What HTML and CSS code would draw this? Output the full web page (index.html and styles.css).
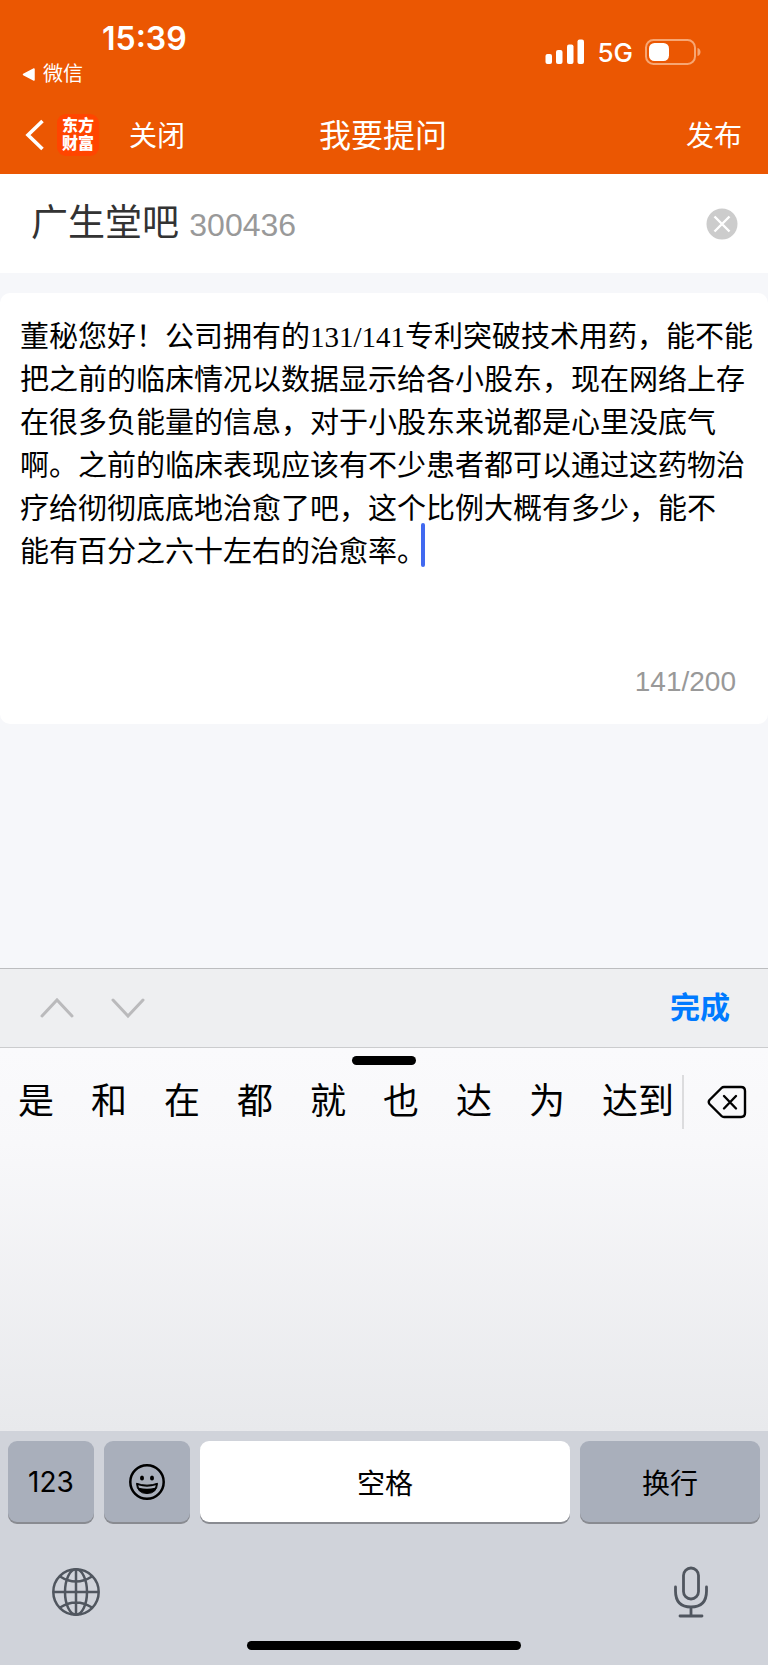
FILE: index.html
```html
<!DOCTYPE html>
<html lang="zh-CN">
<head>
    <meta charset="UTF-8">
    <meta name="viewport" content="width=device-width, initial-scale=1.0">
    <title>我要提问</title>
    <link rel="stylesheet" href="styles.css">
</head>
<body>
<div class="phone">
    <header class="header">
        <div class="status">
            <div class="status-left">
                <p class="time">15:39</p>
                <a class="back-app" href="#">
                    <svg width="13" height="13" viewBox="0 0 13 13"><path d="M12 1V12L1.500 6.500Z" fill="#fff" stroke="#fff" stroke-width="1.500" stroke-linejoin="round"/></svg>
                    微信
                </a>
            </div>
            <div class="status-right">
                <svg width="40" height="26" viewBox="0 0 40 26" fill="#fff">
                    <rect x="0.500" y="15" width="6.500" height="10" rx="2"/>
                    <rect x="11" y="11" width="6.500" height="14" rx="2"/>
                    <rect x="22" y="5.500" width="6.500" height="19.500" rx="2"/>
                    <rect x="32.500" y="0.500" width="6.500" height="24.500" rx="2"/>
                </svg>
                <span class="network">5G</span>
                <svg width="56" height="26" viewBox="0 0 56 26">
                    <rect x="1" y="1" width="49" height="24" rx="7.500" fill="none" stroke="#f7a673" stroke-width="2"/>
                    <path d="M52.500 9c4 1 4 7 0 8z" fill="#f7a673"/>
                    <rect x="4" y="4" width="20" height="18" rx="5.500" fill="#fff"/>
                </svg>
            </div>
        </div>
        <nav class="navbar">
            <div class="nav-left">
                <button class="icon-btn back" aria-label="返回">
                    <svg width="20" height="32" viewBox="0 0 20 32"><path d="M18.500 2L4 16L18.500 30" fill="none" stroke="#fff" stroke-width="3.600"/></svg>
                </button>
                <span class="logo">东方<br>财富</span>
                <button class="nav-btn">关闭</button>
            </div>
            <h1>我要提问</h1>
            <button class="nav-btn publish">发布</button>
        </nav>
    </header>

    <main class="main">
        <div class="stock">
            <p class="stock-name">广生堂吧 <span class="stock-code">300436</span></p>
            <button class="icon-btn" aria-label="清除">
                <svg width="32" height="32" viewBox="0 0 32 32"><circle cx="16" cy="16" r="15.500" fill="#ccc"/><path d="M8.500 8.500L23.500 23.500M23.500 8.500L8.500 23.500" stroke="#fff" stroke-width="2.400"/></svg>
            </button>
        </div>
        <div class="question">
            <div class="editor">
                <textarea class="question-text" aria-label="提问内容" spellcheck="false">董秘您好！公司拥有的131/141专利突破技术用药，能不能把之前的临床情况以数据显示给各小股东，现在网络上存在很多负能量的信息，对于小股东来说都是心里没底气啊。之前的临床表现应该有不少患者都可以通过这药物治疗给彻彻底底地治愈了吧，这个比例大概有多少，能不
能有百分之六十左右的治愈率。</textarea>
                <span class="caret"></span>
            </div>
            <p class="count">141/200</p>
        </div>
    </main>

    <div class="toolbar">
        <button class="icon-btn" aria-label="上一项">
            <svg width="34" height="22" viewBox="0 0 34 22"><path d="M2 19L17 3L32 19" fill="none" stroke="#bababc" stroke-width="3" stroke-linecap="round"/></svg>
        </button>
        <button class="icon-btn" aria-label="下一项">
            <svg width="34" height="22" viewBox="0 0 34 22"><path d="M2 3L17 19L32 3" fill="none" stroke="#bababc" stroke-width="3" stroke-linecap="round"/></svg>
        </button>
        <button class="done">完成</button>
    </div>

    <div class="writing">
        <div class="handle"></div>
        <div class="candidates">
            <button>是</button>
            <button>和</button>
            <button>在</button>
            <button>都</button>
            <button>就</button>
            <button>也</button>
            <button>达</button>
            <button>为</button>
            <button>达到</button>
            <button class="delete" aria-label="删除">
                <svg width="40" height="34" viewBox="0 0 40 34" fill="none" stroke="#000" stroke-width="2.400" stroke-linejoin="round" stroke-linecap="round"><path d="M17 2H34Q38 2 38 6V28Q38 32 34 32H17Q15.500 32 14.500 31L2.500 19Q1 17 2.500 15L14.500 3Q15.500 2 17 2Z"/><path d="M17 11L29 23.500M29 11L17 23.500"/></svg>
            </button>
        </div>
    </div>

    <div class="keyboard">
        <div class="keys">
            <button class="key num">123</button>
            <button class="key" aria-label="表情">
                <svg width="36" height="36" viewBox="0 0 36 36"><circle cx="18" cy="18" r="16.700" fill="none" stroke="#000" stroke-width="2.500"/><ellipse cx="13" cy="14" rx="2" ry="2.500"/><ellipse cx="23" cy="14" rx="2" ry="2.500"/><path d="M7.500 19.300Q18 23 28.500 19.300Q28 29.500 18 29.500Q8 29.500 7.500 19.300Z" stroke="#000" stroke-linejoin="round"/><path d="M9.200 21.300Q18 24 26.800 21.300L26 23.700Q18 26 10 23.700Z" fill="#a9afbb"/></svg>
            </button>
            <button class="key space">空格</button>
            <button class="key enter">换行</button>
        </div>
        <div class="key-tools">
            <button class="icon-btn" aria-label="切换键盘">
                <svg width="48" height="48" viewBox="0 0 48 48" fill="none" stroke="#50565f" stroke-width="2.500"><circle cx="24" cy="24" r="22.700"/><ellipse cx="24" cy="24" rx="11" ry="22.700"/><path d="M24 1V47M1 24H47M8 8.500Q24 18.500 40 8.500M8 39.500Q24 29.500 40 39.500"/></svg>
            </button>
            <button class="icon-btn" aria-label="语音输入">
                <svg width="36" height="52" viewBox="0 0 36 52" fill="none" stroke="#50565f" stroke-width="2.800" stroke-linecap="round"><rect x="10.500" y="2" width="15" height="31" rx="7.500"/><path d="M2.500 21V25Q2.500 41 18 41Q33.500 41 33.500 25V21M18 41V50M7 50H29"/></svg>
            </button>
        </div>
        <div class="home-bar"></div>
    </div>
</div>
</body>
</html>
```
FILE: styles.css
```css
*{
    margin: 0;
    padding: 0;
    box-sizing: border-box;
}
body{
    font-family: "Liberation Sans", "Noto Sans CJK SC", sans-serif;
    background-color: #f6f7fa;
    color: #000;
}
button{
    border: none;
    background: none;
    font-family: inherit;
    color: inherit;
    cursor: pointer;
}
svg{
    display: block;
}
.phone{
    min-height: 100vh;
    display: flex;
    flex-direction: column;
}

/* header */
.header{
    background-color: #eb5702;
    color: #fff;
}
.status{
    display: flex;
    justify-content: space-between;
    padding: 20px 67px 0 22px;
    height: 96px;
}
.time{
    font-family: Inter, sans-serif;
    font-size: 32px;
    font-weight: 600;
    line-height: 38px;
    padding-left: 80px;
}
.back-app{
    display: flex;
    align-items: center;
    gap: 8px;
    color: #fff;
    font-size: 20px;
    line-height: 32px;
    text-decoration: none;
}
.status-right{
    display: flex;
    align-items: center;
    gap: 12px;
    height: 64px;
}
.network{
    font-family: Inter, sans-serif;
    font-size: 26px;
    font-weight: 500;
}
.navbar{
    display: grid;
    grid-template-columns: 1fr auto 1fr;
    align-items: center;
    height: 78px;
    padding: 0 26px 0 24px;
}
.nav-left{
    display: flex;
    align-items: center;
}
.back{
    margin-right: 13px;
}
.logo{
    width: 42px;
    height: 42px;
    padding-top: 3px;
    margin-right: 30px;
    border-radius: 9px;
    background-color: #ff4500;
    font-size: 16px;
    font-weight: 900;
    line-height: 18px;
    text-align: center;
}
.nav-btn{
    padding-top: 4px;
    font-size: 28px;
    line-height: 40px;
}
h1{
    padding-top: 2px;
    font-size: 32px;
    font-weight: 400;
    line-height: 40px;
}
.publish{
    justify-self: end;
}

/* question form */
.main{
    flex: 1;
}
.stock{
    display: flex;
    align-items: center;
    justify-content: space-between;
    height: 99px;
    padding: 0 30px 0 31px;
    background-color: #fff;
}
.stock-name{
    padding-top: 2px;
    font-size: 37px;
    line-height: 54px;
    color: #333;
}
.stock-code{
    font-size: 32px;
    color: #999;
}
.question{
    margin-top: 20px;
    padding: 23px 0 20px;
    border-radius: 10px;
    background-color: #fff;
}
.editor{
    position: relative;
}
.question-text{
    display: block;
    width: 100%;
    height: 344px;
    padding: 0 12px 0 20px;
    border: none;
    outline: none;
    resize: none;
    overflow: hidden;
    background: none;
    color: #000;
    font-family: "Liberation Serif", "Noto Sans CJK SC", serif;
    font-size: 29px;
    line-height: 43px;
}
.caret{
    position: absolute;
    left: 421px;
    top: 207px;
    width: 4px;
    height: 44px;
    border-radius: 2px;
    background-color: #4169f0;
}
.count{
    padding-right: 32px;
    font-size: 28px;
    line-height: 44px;
    text-align: right;
    color: #999;
}

/* bar over the keyboard */
.toolbar{
    display: flex;
    align-items: center;
    gap: 37px;
    height: 80px;
    padding: 0 38px 0 40px;
    border-top: 1px solid #bcbdbf;
    border-bottom: 1px solid #cbccce;
    background-color: #eeeff1;
}
.done{
    margin-left: auto;
    font-size: 30px;
    font-weight: 700;
    line-height: 44px;
    color: #007aff;
}

/* handwriting area */
.writing{
    height: 383px;
    padding-top: 8px;
    background: linear-gradient(#fafafc, #f8f8fa 25%, #e8e9ec);
}
.handle{
    width: 64px;
    height: 9px;
    margin: 0 auto;
    border-radius: 5px;
    background-color: #000;
}
.candidates{
    display: flex;
    align-items: center;
    justify-content: space-between;
    height: 54px;
    margin-top: 10px;
    padding: 0 21px 0 18px;
}
.candidates button{
    font-size: 36px;
    line-height: 54px;
}
.candidates .delete{
    display: flex;
    align-items: center;
    height: 54px;
    margin-left: -29px;
    padding-left: 23px;
    border-left: 2px solid #dcdcde;
}

/* keyboard */
.keyboard{
    height: 234px;
    padding-top: 10px;
    background-color: #d0d3da;
}
.keys{
    display: grid;
    grid-template-columns: 86fr 86fr 371fr 180fr;
    gap: 10px;
    padding: 0 8px;
}
.key{
    display: flex;
    align-items: center;
    justify-content: center;
    height: 81px;
    border-radius: 9px;
    background-color: #a9afbb;
    box-shadow: 0 2px 0 #898b91;
    font-size: 28px;
}
.num{
    font-family: Inter, sans-serif;
}
.space{
    background-color: #fff;
}
.key-tools{
    display: flex;
    align-items: center;
    justify-content: space-between;
    margin-top: 44px;
    padding: 0 59px 0 52px;
}
.home-bar{
    width: 274px;
    height: 9px;
    margin: 23px auto 0;
    border-radius: 5px;
    background-color: #000;
}
```
